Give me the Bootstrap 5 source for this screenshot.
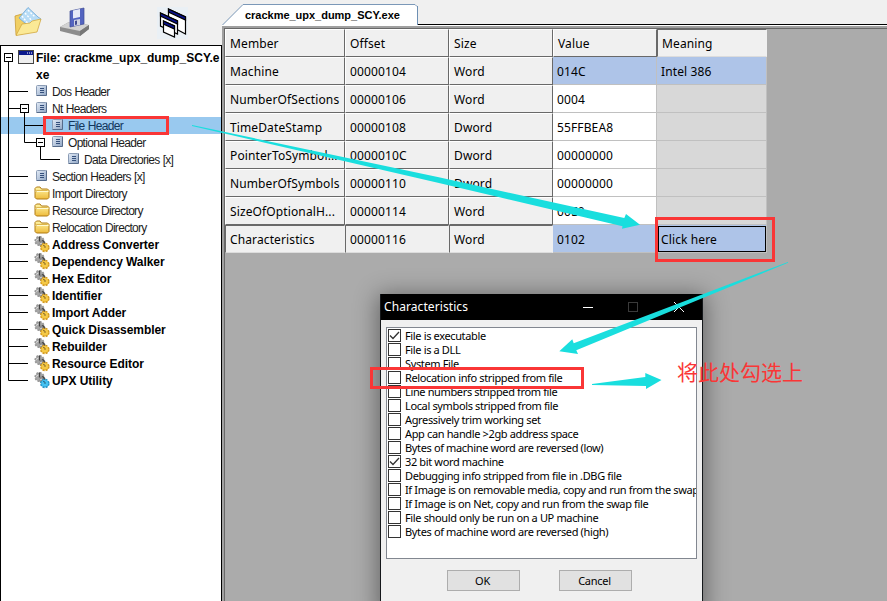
<!DOCTYPE html>
<html lang="en">
<head>
<meta charset="utf-8">
<meta name="viewport" content="width=device-width, initial-scale=1">
<title>crackme_upx_dump_SCY.exe</title>
<link href="https://cdn.jsdelivr.net/npm/bootstrap@5.3.0/dist/css/bootstrap.min.css" rel="stylesheet">
<style>
  body { background: #f0f0f0; color: #000; font: 12px/17px "Liberation Sans", Arial, sans-serif; }
  svg { display: block; flex: none; }
  .app { width: 887px; height: 601px; }
  .side { width: 222px; }
  .toolstrip { height: 45px; padding: 7px 0 0 14px; }
  .tree { border: 1px solid #000; border-bottom: 0; background: #fff; padding-top: 3px; }
  .node { height: 17px; padding-left: 0; white-space: nowrap; letter-spacing: -.7px; word-spacing: .6px; color: #1c1c1c; }
  .node > svg:first-child { margin-left: -1px; }
  .node span { padding-left: 2px; line-height: 18px; }
  .node.tool span, .node.root span { font-weight: 700; letter-spacing: -.06px; word-spacing: 0; color: #000; }
  .node.root { height: 34px; }
  .node.root span { line-height: 17px; letter-spacing: -.02px; padding-top: 1px; }
  .node.active { background: #99c9ef; }
  .node.active span { color: #12365c; }
  .main { font: 12px/27px "Noto Sans", "Open Sans", sans-serif; letter-spacing: .12px; }
  .tabs { height: 26px; }
  .tab-label { position: absolute; left: 23px; top: 5px; font: 700 11px/20px "Liberation Sans", Arial, sans-serif; letter-spacing: -.22px; }
  .tab-label { letter-spacing: -.02px; transform-origin: left; }
  .client { background: #ababab; border-style: solid; border-color: #a0a0a0; border-width: 2px 0 0 2px; }
  .client-in { border: 1px solid #696969; border-width: 1px 0 0 1px; }
  .sheet { display: grid; grid-template-columns: 120px 104px 104px 104px 110px; grid-auto-rows: 28px; width: 542px; }
  .sheet > div { padding-left: 4px; white-space: nowrap; overflow: hidden; line-height: 30px; }
  .sheet > .fx { background: #f0f0f0; border: 1px solid #fff; border-right-color: #696969; border-bottom-color: #696969; line-height: 28px; }
  .vl { background: #fff; border: 1px solid #c0c0c0; border-width: 0 1px 1px 0; }
  .mn { background: #d8d8d8; border: 1px solid #c0c0c0; border-width: 0 1px 1px 0; }
  .on { background: #aec4e8; }
  .sheet > .dn { border-color: #696969 #f0f0f0 #dcdcdc #696969; }
  .click-cell { outline: 1px solid #000; outline-offset: -2px; }
  .dlg { position: absolute; left: 380px; top: 294px; width: 323px; height: 320px; border: 1px solid #15181b; border-top: 0; background: #f0f0f0; box-shadow: 0 3px 22px 2px rgba(0,0,0,.42); }
  .dlg-title { height: 26px; background: #000; color: #fff; font: 12px/26px "Noto Sans", sans-serif; letter-spacing: .08px; padding: 0 18px 0 3px; }
  .dlg-list { margin: 7px 5px 0; height: 232px; border: 1px solid #828790; background: #fff; padding: 1px 1px 0 1px; font: 11px/14px "Noto Sans", sans-serif; letter-spacing: -.36px; overflow: hidden; }
  .opt { height: 14px; white-space: nowrap; }
  .opt > span { padding-left: 4px; line-height: 14px; }
  .box { width: 13px; height: 13px; border: 1px solid #333; background: #fff; flex: none; }
  .btns { padding: 11px 0 0 66px; gap: 39px; }
  .dbtn { width: 73px; height: 21px; border: 1px solid #adadad; background: #e1e1e1; border-radius: 0; padding: 0 2px 0 0; font: 11px/19px "Noto Sans", sans-serif; color: #000; letter-spacing: -.25px; }
  .marks { position: absolute; left: 0; top: 0; pointer-events: none; }
  .note { position: absolute; left: 677px; top: 357px; font: 400 21px/28px "Noto Sans CJK SC", sans-serif; color: #fa3636; white-space: nowrap; }
</style>
<script src="https://cdn.jsdelivr.net/npm/bootstrap@5.3.0/dist/js/bootstrap.bundle.min.js"></script>
</head>
<body class="overflow-hidden">
<svg width="0" height="0" class="position-absolute">
  <defs>
    <linearGradient id="gDoc" x2="1" y2="1"><stop stop-color="#e4ecf7"/><stop offset="1" stop-color="#8fa5c4"/></linearGradient>
    <linearGradient id="gFold" y2="1" x2="0"><stop stop-color="#fff6a8"/><stop offset="1" stop-color="#eebb3c"/></linearGradient>
    <symbol id="doc" viewBox="0 0 16 17"><rect x="2.500" y="2.500" width="10" height="10" rx="1" fill="url(#gDoc)" stroke="#8b9cb5"/><path d="M2.500 12.500h10v-10" fill="none" stroke="#566b8a"/><path d="M6 5.500h4M6 7.500h4M6 9.500h4" stroke="#35507c"/></symbol>
    <symbol id="fold" viewBox="0 0 16 17"><path d="M1 12.500V3.500L2.500 2H6l1.500 2h6L15 5.500v7L13.500 14h-11z" fill="url(#gFold)" stroke="#b07a12"/><path d="M1.500 6.500h13" stroke="#fffbd0"/><path d="M2 7.500V6l1-.5h10.500" fill="none" stroke="#c8962a" stroke-width=".6"/></symbol>
    <symbol id="gearG" viewBox="0 0 16 17"><circle cx="5.500" cy="5" r="4.300" fill="#a6a6a6" stroke="#999" stroke-width="1.600" stroke-dasharray="2 1.300"/><ellipse cx="8.500" cy="8" rx="3" ry="4" fill="#8b8b8b"/><path d="M5.500 .5v5M8.500 4l2 3v3" stroke="#444" stroke-width="1.300" fill="none"/><path d="M2 4.500l2.500-1.500M6 8l2-1" stroke="#ddd"/></symbol>
    <symbol id="gear" viewBox="0 0 16 17"><use href="#gearG"/><circle cx="10.800" cy="11.500" r="3.800" fill="#f0b92e" stroke="#d39a20" stroke-width="2" stroke-dasharray="2 1"/><circle cx="10.800" cy="11.300" r="3.300" fill="#f5c945"/><path d="M9 9.500l2 .5v2" stroke="#8a6b2a" fill="none"/></symbol>
    <symbol id="gearB" viewBox="0 0 16 17"><use href="#gearG"/><circle cx="10.800" cy="11.500" r="3.800" fill="#36b1e6" stroke="#2495c8" stroke-width="2" stroke-dasharray="2 1"/><circle cx="10.800" cy="11.300" r="3.300" fill="#45c2f2"/><path d="M9 9.500l2 .5v2" stroke="#29647f" fill="none"/></symbol>
    <symbol id="l1" viewBox="0 0 34 17"><path d="M8.500 0v17M8 8.500h20" stroke="#000" fill="none"/></symbol>
    <symbol id="l1end" viewBox="0 0 34 17"><path d="M8.500 0v8.500H28" stroke="#000" fill="none"/></symbol>
    <symbol id="lroot" viewBox="0 0 18 34"><path d="M8.500 13v21" stroke="#000"/><rect x="4.500" y="4.500" width="8" height="8" fill="#fff" stroke="#000"/><path d="M6 8.500h5" stroke="#000"/></symbol>
    <symbol id="l1x" viewBox="0 0 34 17"><path d="M8.500 0v17M8 8.500h12M24.500 13v4" stroke="#000" fill="none"/><rect x="20.500" y="4.500" width="8" height="8" fill="#fff" stroke="#000"/><path d="M22 8.500h5" stroke="#000"/></symbol>
    <symbol id="l2" viewBox="0 0 50 17"><path d="M.5 0v17M8.500 0v17M24.500 0v17M24 8.500h20" stroke="#000"/></symbol>
    <symbol id="l2x" viewBox="0 0 50 17"><path d="M8.500 0v17M24.500 0v8.500H36M40.500 13v4" stroke="#000" fill="none"/><rect x="36.500" y="4.500" width="8" height="8" fill="#fff" stroke="#000"/><path d="M38 8.500h5" stroke="#000"/></symbol>
    <symbol id="l3" viewBox="0 0 66 17"><path d="M8.500 0v17M40.500 0v8.500H60" stroke="#000" fill="none"/></symbol>
  </defs>
</svg>

<div class="app d-flex position-relative overflow-hidden">
  <aside class="side d-flex flex-column">
    <div class="toolstrip d-flex">
      <svg width="30" height="31" viewBox="0 0 30 31">
        <path d="M2 28L1 9l7-2 3 2 8-2 3 3v14z" fill="#f1cf63" stroke="#c99c35" stroke-width=".8"/>
        <path d="M14 .5L24 10l3 2-9 10L5 11z" fill="#b7dcf6" stroke="#6ba6d6" stroke-width=".8"/>
        <path d="M14 3l7 7M11 6l8 9M8 9l7 9" stroke="#fff" stroke-width="1.400" stroke-dasharray="2 1.500"/>
        <path d="M2 28.500L8 17l8-1 2-2 9-2-4 13z" fill="#fbe996" stroke="#d3a840" stroke-width=".8"/>
      </svg>
      <svg width="30" height="31" viewBox="0 0 30 31" style="margin-left:16px">
        <path d="M0 20l9-5 20 3v4l-9 7-20-5z" fill="#8d8d8d"/><path d="M0 20l9-5 20 3-9 6z" fill="#d2d2d2"/><path d="M20 24v5l9-7v-4z" fill="#777"/>
        <path d="M10 4l14-3v16l-14 3z" fill="#5364c0" stroke="#3e4a93" stroke-width=".7"/><path d="M13 3.500l7-1.500v8l-7 1.500z" fill="#e6e9f7"/><path d="M14 13l6-1v6l-6 1z" fill="#cfd3e3"/><path d="M15 14l2-.4v4l-2 .4z" fill="#414b91"/>
      </svg>
      <svg width="31" height="32" viewBox="0 0 31 32" style="margin-left:67px">
        <rect width="31" height="32" fill="#eaf0f5"/>
        <g fill="#fff" stroke="#000" stroke-width="1.200"><path d="M11.500 2l17 8v17l-17-9z"/><path d="M11.500 2l17 8v3l-17-8z" fill="#0b128f"/><path d="M3.500 6l17 8v13l-17-8z"/><path d="M3.500 6l17 8v3l-17-8z" fill="#0b128f"/><path d="M6.500 14l11 5v11l-11-5z"/><path d="M6.500 14l11 5v3l-11-5z" fill="#0b128f"/></g>
      </svg>
    </div>

    <div class="tree flex-fill">
      <div class="node root d-flex"><svg width="18" height="34"><use href="#lroot"/></svg>
        <svg width="16" height="17" viewBox="0 0 16 17"><rect x=".5" y="1.500" width="15" height="13" fill="#eee" stroke="#444"/><path d="M1 4h14" stroke="#0c1a8c" stroke-width="4"/><path d="M9 4h1M11 4h1M13 4h1" stroke="#fff"/></svg>
        <span>File: crackme_upx_dump_SCY.e<br>xe</span></div>
      <div class="node d-flex"><svg width="34" height="17"><use href="#l1"/></svg><svg width="16" height="17"><use href="#doc"/></svg><span>Dos Header</span></div>
      <div class="node d-flex"><svg width="34" height="17"><use href="#l1x"/></svg><svg width="16" height="17"><use href="#doc"/></svg><span>Nt Headers</span></div>
      <div class="node active d-flex"><svg width="50" height="17"><use href="#l2"/></svg><svg width="16" height="17"><use href="#doc"/></svg><span>File Header</span></div>
      <div class="node d-flex"><svg width="50" height="17"><use href="#l2x"/></svg><svg width="16" height="17"><use href="#doc"/></svg><span>Optional Header</span></div>
      <div class="node d-flex"><svg width="66" height="17"><use href="#l3"/></svg><svg width="16" height="17"><use href="#doc"/></svg><span>Data Directories [x]</span></div>
      <div class="node d-flex"><svg width="34" height="17"><use href="#l1"/></svg><svg width="16" height="17"><use href="#doc"/></svg><span>Section Headers [x]</span></div>
      <div class="node d-flex"><svg width="34" height="17"><use href="#l1"/></svg><svg width="16" height="17"><use href="#fold"/></svg><span>Import Directory</span></div>
      <div class="node d-flex"><svg width="34" height="17"><use href="#l1"/></svg><svg width="16" height="17"><use href="#fold"/></svg><span>Resource Directory</span></div>
      <div class="node d-flex"><svg width="34" height="17"><use href="#l1"/></svg><svg width="16" height="17"><use href="#fold"/></svg><span>Relocation Directory</span></div>
      <div class="node tool d-flex"><svg width="34" height="17"><use href="#l1"/></svg><svg width="16" height="17"><use href="#gear"/></svg><span>Address Converter</span></div>
      <div class="node tool d-flex"><svg width="34" height="17"><use href="#l1"/></svg><svg width="16" height="17"><use href="#gear"/></svg><span>Dependency Walker</span></div>
      <div class="node tool d-flex"><svg width="34" height="17"><use href="#l1"/></svg><svg width="16" height="17"><use href="#gear"/></svg><span>Hex Editor</span></div>
      <div class="node tool d-flex"><svg width="34" height="17"><use href="#l1"/></svg><svg width="16" height="17"><use href="#gear"/></svg><span>Identifier</span></div>
      <div class="node tool d-flex"><svg width="34" height="17"><use href="#l1"/></svg><svg width="16" height="17"><use href="#gear"/></svg><span>Import Adder</span></div>
      <div class="node tool d-flex"><svg width="34" height="17"><use href="#l1"/></svg><svg width="16" height="17"><use href="#gear"/></svg><span>Quick Disassembler</span></div>
      <div class="node tool d-flex"><svg width="34" height="17"><use href="#l1"/></svg><svg width="16" height="17"><use href="#gear"/></svg><span>Rebuilder</span></div>
      <div class="node tool d-flex"><svg width="34" height="17"><use href="#l1"/></svg><svg width="16" height="17"><use href="#gear"/></svg><span>Resource Editor</span></div>
      <div class="node tool d-flex"><svg width="34" height="17"><use href="#l1end"/></svg><svg width="16" height="17"><use href="#gearB"/></svg><span>UPX Utility</span></div>
    </div>
  </aside>

  <main class="main flex-fill d-flex flex-column">
    <div class="tabs position-relative">
      <svg width="665" height="26" viewBox="0 0 665 26"><path d="M195 24.500h470" stroke="#000"/><path d="M0 25h665v1H0z" fill="#fff"/><path d="M.5 25.500L21 4.500h172l2 2V25.500z" fill="#fff"/><path d="M.5 25L21 4.500h172l2 2" fill="none" stroke="#7b98b8"/><path d="M195.500 6v19" stroke="#6d8fb3"/></svg>
      <span class="tab-label">crackme_upx_dump_SCY.exe</span>
    </div>
    <div class="client flex-fill d-flex"><div class="client-in flex-fill">
      <div class="sheet">
        <div class="fx">Member</div><div class="fx">Offset</div><div class="fx">Size</div><div class="fx">Value</div><div class="fx dn">Meaning</div>
        <div class="fx">Machine</div><div class="fx">00000104</div><div class="fx">Word</div><div class="vl on">014C</div><div class="mn on">Intel 386</div>
        <div class="fx">NumberOfSections</div><div class="fx">00000106</div><div class="fx">Word</div><div class="vl">0004</div><div class="mn"></div>
        <div class="fx">TimeDateStamp</div><div class="fx">00000108</div><div class="fx">Dword</div><div class="vl">55FFBEA8</div><div class="mn"></div>
        <div class="fx">PointerToSymbol...</div><div class="fx">0000010C</div><div class="fx">Dword</div><div class="vl">00000000</div><div class="mn"></div>
        <div class="fx">NumberOfSymbols</div><div class="fx">00000110</div><div class="fx">Dword</div><div class="vl">00000000</div><div class="mn"></div>
        <div class="fx">SizeOfOptionalH...</div><div class="fx">00000114</div><div class="fx">Word</div><div class="vl">00E0</div><div class="mn"></div>
        <div class="fx dn">Characteristics</div><div class="fx dn">00000116</div><div class="fx dn">Word</div><div class="vl on">0102</div><div class="mn on click-cell">Click here</div>
      </div>
    </div></div>
  </main>

  <section class="dlg">
    <div class="dlg-title d-flex justify-content-between align-items-center"><span>Characteristics</span>
      <svg width="101" height="26" viewBox="0 0 101 26" fill="none"><path d="M0 13.500h10" stroke="#fff"/><rect x="45.500" y="8.500" width="9" height="9" stroke="#3a3a3a"/><path d="M91 8l10 10M101 8L91 18" stroke="#fff"/></svg>
    </div>
    <div class="dlg-list">
      <div class="opt d-flex"><i class="box"><svg width="11" height="11" fill="none" stroke="#333" stroke-width="1.300"><path d="M1 5.500L4 8.500 10 2"/></svg></i><span>File is executable</span></div>
      <div class="opt d-flex"><i class="box"></i><span>File is a DLL</span></div>
      <div class="opt d-flex"><i class="box"></i><span>System File</span></div>
      <div class="opt d-flex"><i class="box"></i><span>Relocation info stripped from file</span></div>
      <div class="opt d-flex"><i class="box"></i><span>Line numbers stripped from file</span></div>
      <div class="opt d-flex"><i class="box"></i><span>Local symbols stripped from file</span></div>
      <div class="opt d-flex"><i class="box"></i><span>Agressively trim working set</span></div>
      <div class="opt d-flex"><i class="box"></i><span>App can handle &gt;2gb address space</span></div>
      <div class="opt d-flex"><i class="box"></i><span>Bytes of machine word are reversed (low)</span></div>
      <div class="opt d-flex"><i class="box"><svg width="11" height="11" fill="none" stroke="#333" stroke-width="1.300"><path d="M1 5.500L4 8.500 10 2"/></svg></i><span>32 bit word machine</span></div>
      <div class="opt d-flex"><i class="box"></i><span>Debugging info stripped from file in .DBG file</span></div>
      <div class="opt d-flex"><i class="box"></i><span>If Image is on removable media, copy and run from the swap</span></div>
      <div class="opt d-flex"><i class="box"></i><span>If Image is on Net, copy and run from the swap file</span></div>
      <div class="opt d-flex"><i class="box"></i><span>File should only be run on a UP machine</span></div>
      <div class="opt d-flex"><i class="box"></i><span>Bytes of machine word are reversed (high)</span></div>
    </div>
    <div class="btns d-flex"><button class="btn dbtn">OK</button><button class="btn dbtn">Cancel</button></div>
  </section>

  <svg class="marks" width="887" height="601" viewBox="0 0 887 601">
    <g fill="none" stroke="#fa3636" stroke-width="3"><path d="M44.500 117.500h123v16h-123zM656.500 218.500h117v42h-117zM371.500 368.500h211v19h-211z"/></g>
    <g fill="#19dede">
      <path d="M192 125L440 177.500 624.300 218 626 214 640 224.700 622 228.700 622.500 226.300 440 183.300 192 126z"/>
      <path d="M788 262L573.700 343.300 572.300 339.300 559.300 351.300 578 354 576.300 350.300 788 262.700z"/>
      <path d="M592 384L645.300 377V373L661.500 380 646 389V386L592 385z"/>
    </g>
  </svg>
  <div class="note" lang="zh-CN">将此处勾选上</div>
</div>
</body>
</html>
